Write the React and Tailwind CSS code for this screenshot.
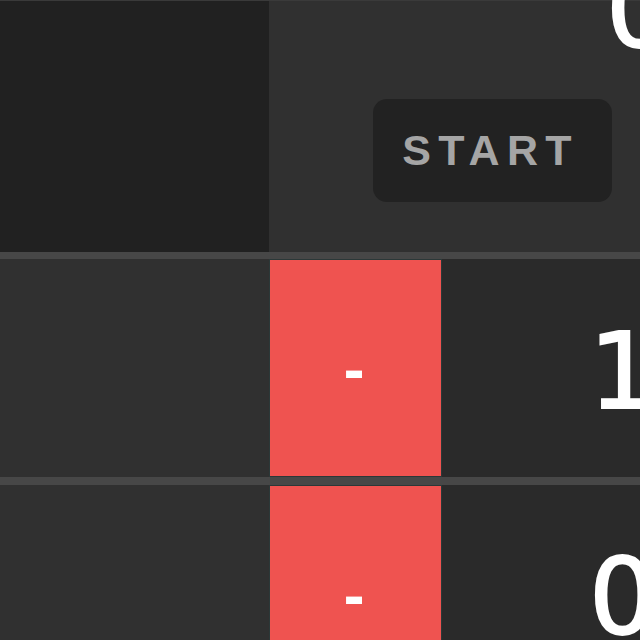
const rows = [
  { id: 1, value: "1" },
  { id: 2, value: "0" },
];

const Row = ({ value }) => (
  <div className="flex h-[218px] shrink-0">
    <div className="w-[269px] shrink-0 bg-[#303030]" />
    <button className="flex w-[173px] shrink-0 items-center justify-center border border-[#2b3838] bg-[#ef5350] pt-[6px] pr-[3px] font-['DejaVu_Sans',sans-serif] text-[52px] font-bold leading-none text-white">
      -
    </button>
    <div className="flex min-w-0 flex-1 items-center bg-[#2a2a2a] pt-[8px] pl-[147px] font-['DejaVu_Sans',sans-serif] text-[105px] leading-none whitespace-nowrap text-white [-webkit-text-stroke:2px_white]">
      {value}
    </div>
  </div>
);

const App = () => {
  return (
    <div className="flex h-[640px] w-[640px] flex-col overflow-hidden bg-[#2a2a2a]">
      <div className="flex h-[252px] shrink-0 border-t border-[#3a3a3a]">
        <div className="w-[269px] shrink-0 bg-[#212121]" />
        <div className="flex min-w-0 flex-1 flex-col bg-[#303030] pl-[104px]">
          <div className="-mt-[42px] h-[104px] pl-[233px] font-['DejaVu_Sans',sans-serif] text-[105px] leading-none whitespace-nowrap text-white [-webkit-text-stroke:2px_white]">
            0
          </div>
          <button className="mt-[36px] flex h-[103px] w-[239px] shrink-0 items-center justify-center rounded-[14px] bg-[#222222] pr-[4px] font-['Liberation_Sans',sans-serif] text-[43px] font-bold tracking-[0.17em] text-[#a5a5a5]">
            START
          </button>
        </div>
      </div>
      {rows.map((row, i) => (
        <div key={row.id} className="flex shrink-0 flex-col">
          <div className={i === 0 ? "h-[7px] bg-[#474747]" : "h-[8px] bg-[#474747]"} />
          <Row value={row.value} />
        </div>
      ))}
    </div>
  );
};

export default App;
